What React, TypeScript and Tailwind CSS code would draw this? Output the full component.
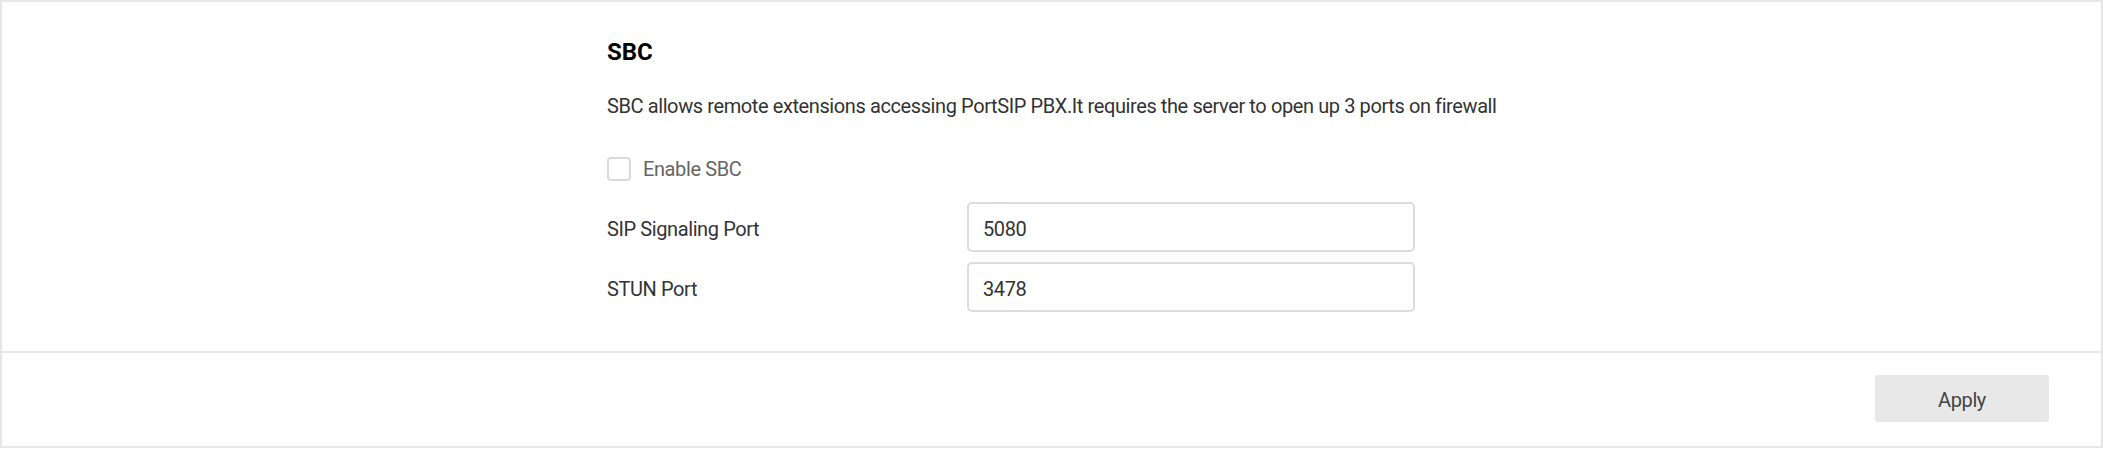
export default function App() {
  const fields = [
    { label: "SIP Signaling Port", value: "5080" },
    { label: "STUN Port", value: "3478" },
  ];

  return (
    <div className="w-full h-[448px] bg-white border-2 border-[#e6e6e6] flex flex-col font-['Roboto',sans-serif] text-[20px] tracking-[-0.4px] text-[#333]">
      <section className="h-[349px] pl-[605px] pt-[34px]">
        <h2 className="text-[24px] leading-[32px] font-bold text-black tracking-normal">SBC</h2>
        <p className="mt-[24px] leading-[28px]">
          SBC allows remote extensions accessing PortSIP PBX.It requires the server to open up 3 ports on firewall
        </p>

        <label className="mt-[37px] flex items-center h-[24px] w-fit">
          <span className="w-[24px] h-[24px] rounded-[4px] border-2 border-[#dadada] bg-white" />
          <span className="ml-[12px] leading-[24px] text-[#666]">Enable SBC</span>
        </label>

        <div className="mt-[21px] flex flex-col gap-[10px]">
          {fields.map((f) => (
            <div key={f.label} className="flex items-center h-[50px]">
              <div className="w-[360px] pt-[3px] leading-[24px]">{f.label}</div>
              <div className="w-[448px] h-[50px] rounded-[5px] border-2 border-[#dcdcdc] flex items-center pl-[14px] pt-[3px] leading-[24px]">
                {f.value}
              </div>
            </div>
          ))}
        </div>
      </section>

      <div className="h-[2px] bg-[#e8e8e8]" />

      <footer className="flex-1 flex justify-end items-start pt-[22px] pr-[52px]">
        <button className="w-[174px] h-[47px] rounded-[3px] bg-[#e8e8e8] text-[#444] pt-[2px]">
          Apply
        </button>
      </footer>
    </div>
  );
}
